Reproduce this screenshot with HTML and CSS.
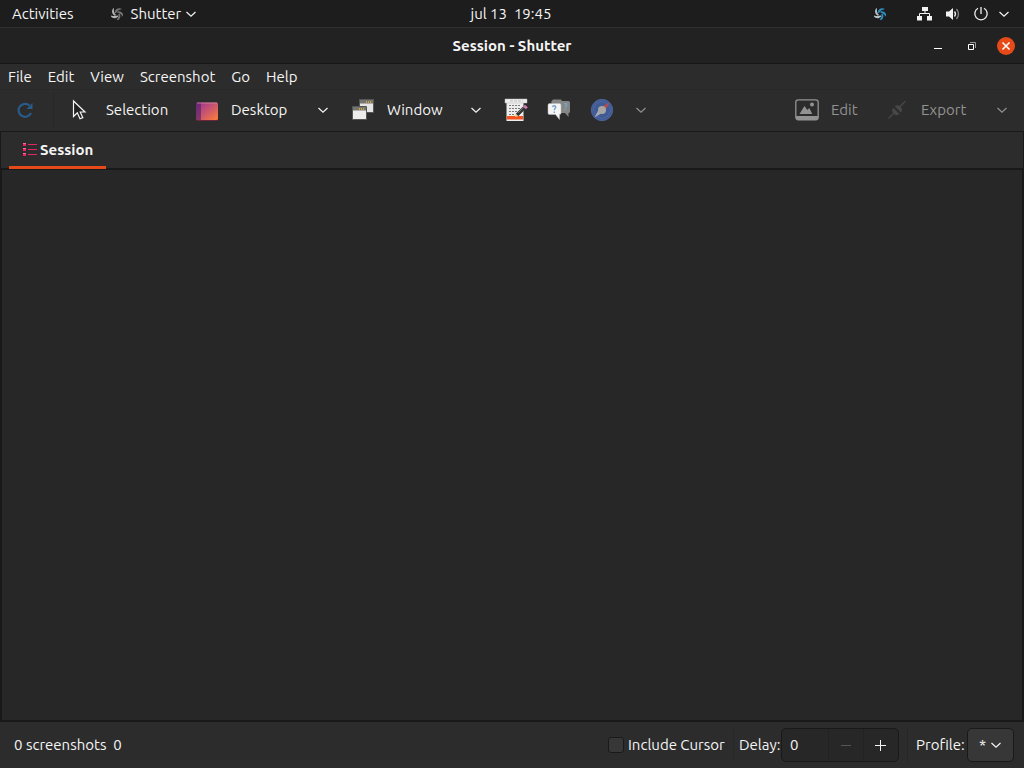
FILE: index.html
```html
<!DOCTYPE html>
<html lang="en">
<head>
<meta charset="utf-8">
<title>Session - Shutter</title>
<link rel="stylesheet" href="styles.css">
</head>
<body>
<svg class="defs" aria-hidden="true">
  <defs>
    <symbol id="chevron" viewBox="0 0 12 12"><path d="M1.500 4 6 8.200 10.500 4" fill="none" stroke="currentColor" stroke-width="1.200"/></symbol>
    <symbol id="swirl" viewBox="0 0 12 12">
      <path d="M11 1C8-.6 4.200.5 3.600 4.800L5 5.200C5.800 2.800 8 2 11 1z" fill="var(--b)"/>
      <path d="M11 1C8-.6 4.200.5 3.600 4.800L5 5.200C5.800 2.800 8 2 11 1z" fill="var(--b)" transform="rotate(72 6 6)"/>
      <path d="M11 1C8-.6 4.200.5 3.600 4.800L5 5.200C5.800 2.800 8 2 11 1z" fill="var(--b)" transform="rotate(144 6 6)"/>
      <path d="M11 1C8-.6 4.200.5 3.600 4.800L5 5.200C5.800 2.800 8 2 11 1z" fill="var(--a)" transform="rotate(216 6 6)"/>
      <path d="M11 1C8-.6 4.200.5 3.600 4.800L5 5.200C5.800 2.800 8 2 11 1z" fill="var(--a)" transform="rotate(288 6 6)"/>
    </symbol>
  </defs>
</svg>
<div class="desktop">
  <header class="panel">
    <div class="panel-left">
      <button class="panel-button">Activities</button>
      <button class="panel-button app-button"><svg class="swirl gray"><use href="#swirl"/></svg><span>Shutter</span><svg class="chev"><use href="#chevron"/></svg></button>
    </div>
    <time class="clock">jul 13&nbsp; 19:45</time>
    <div class="panel-right">
      <svg class="swirl blue"><use href="#swirl"/></svg>
      <div class="trays">
        <svg class="tray" viewBox="0 0 16 16"><path d="M5 1h6v4H5zM0 10h5v4.500H0zM10 10h5v4.500h-5z" fill="#f2f2f2"/><path d="M8 5v2.500M2.500 10V7.500h10V10" fill="none" stroke="#f2f2f2"/></svg>
        <svg class="tray" viewBox="0 0 16 16"><path d="M1 5.500h3L8 2v12L4 10.500H1z" fill="#f2f2f2"/><path d="M9.500 5.500q2 2.500 0 5" fill="none" stroke="#f2f2f2" stroke-width="1.300"/><path d="M11.500 3q4 5 0 10" fill="none" stroke="#858585" stroke-width="1.300"/></svg>
        <svg class="tray" viewBox="0 0 16 16"><path d="M5 2.300a6.200 6.200 0 1 0 6 0M8 1v7" fill="none" stroke="#f2f2f2" stroke-width="1.300"/></svg>
      </div>
      <svg class="chev"><use href="#chevron"/></svg>
    </div>
  </header>

  <div class="titlebar">
    <div></div>
    <h1 class="title">Session - Shutter</h1>
    <div class="window-controls">
      <button class="control" aria-label="Minimize"><svg viewBox="0 0 18 18"><path d="M5 11.500h8" stroke="#fff"/></svg></button>
      <button class="control" aria-label="Restore"><svg viewBox="0 0 18 18"><path d="M5.500 7.500h5v5h-5z" fill="none" stroke="#fff"/><path d="M7 5.500h5.500V11" fill="none" stroke="#999"/></svg></button>
      <button class="control close" aria-label="Close"><svg viewBox="0 0 18 18"><path d="m5.500 5.500 7 7m0-7-7 7" stroke="#fff" stroke-width="1.500"/></svg></button>
    </div>
  </div>

  <nav class="menubar">
    <button>File</button><button>Edit</button><button>View</button><button>Screenshot</button><button>Go</button><button>Help</button>
  </nav>

  <div class="toolbar">
    <button class="tool refresh" aria-label="Redo last screenshot"><svg viewBox="0 0 24 24"><path d="M16.500 7.500A6.500 6.500 0 1 0 18 15" fill="none" stroke="#2a5b88" stroke-width="2.200"/><path d="M19.500 5v6H13.500z" fill="#2a5b88"/></svg></button>
    <span class="divider"></span>
    <button class="tool selection"><svg viewBox="0 0 24 24"><path d="M3.500 3v15.500l3.800-3.700 2.700 6 2.800-1.200-2.600-5.600h4.800z" fill="#222" stroke="#f5f5f5" stroke-width="1.200"/></svg><span>Selection</span></button>
    <button class="tool wallpaper"><svg viewBox="0 0 24 24"><defs><linearGradient id="dg" x1="0" y1="0" x2="1" y2="1"><stop offset="0" stop-color="#9b3192"/><stop offset=".5" stop-color="#c9556f"/><stop offset="1" stop-color="#ff7f36"/></linearGradient></defs><rect x="1" y="5" width="22" height="18" rx="1.500" fill="#6b2638"/><rect x="1" y="4.500" width="22" height="17.500" rx="1.500" fill="url(#dg)"/><path d="M1 6q0-1.500 1.500-1.500H6V22H2.500Q1 22 1 20.500z" fill="#431d68" opacity=".55"/><path d="M2 5h20" stroke="#e6a0ae" opacity=".6"/></svg><span>Desktop</span></button>
    <button class="tool arrow" aria-label="Desktop options"><svg class="chev"><use href="#chevron"/></svg></button>
    <button class="tool window"><svg viewBox="0 0 24 24"><g stroke="#555753"><path d="M8.500 1.500h14v13h-14z" fill="#e5e5e5"/><path d="M1.500 8.500h14v13h-14z" fill="#ededed"/></g><path d="M9 2h13v3.500H9zM2 9h13v3.500H2z" fill="#747672"/><path d="M15 4h1m1 0h1m1 0h1M8 11h1m1 0h1m1 0h1" stroke="#f3ae2c" stroke-width="1.500"/></svg><span>Window</span></button>
    <button class="tool arrow" aria-label="Window options"><svg class="chev"><use href="#chevron"/></svg></button>
    <span class="gap"></span>
    <button class="tool icon-only" aria-label="Menu capture"><svg viewBox="0 0 24 24"><path d="M2.500 3h17v20h-17z" fill="#ededed"/><path d="M1 1h22v4H1z" fill="#eee" stroke="#bbb" stroke-width=".5"/><path d="M6 3h13" stroke="#bbb" stroke-dasharray="3 1"/><path d="M5 7.500h12M5 10.500h11M5 13.500h8M5 16.500h5" stroke="#77797a" stroke-dasharray="2 1"/><path d="M3 18h16v3.500H3z" fill="#f4511e"/><path d="m13 17 8-8" stroke="#303030" stroke-width="3.400"/><path d="m20.500 10 1.800-2" stroke="#d47bb8" stroke-width="4"/><path d="m11 19 .7-3.200 2.600 2.500z" fill="#dece75"/><path d="m14 15 6-5.800" stroke="#858585" stroke-width=".8"/></svg></button>
    <button class="tool icon-only" aria-label="Tooltip capture"><svg viewBox="0 0 24 24"><path d="M6 1.500h8L15 3h6.500q1.500 0 1.500 1.500v9q0 1.500-1.500 1.500v4L18 15h-5L4 4z" fill="#858684"/><path d="M2.500 5.500h10q1.500 0 1.500 1.500v8q0 1.500-1.500 1.500v5l-4-5h-6Q1 16.500 1 15V7q0-1.500 1.500-1.500z" fill="#f4f4f4" stroke="#bbb" stroke-width=".5"/><path d="M5.500 9Q6 7.500 7.500 7.800q2 .5.700 2.500-.9 1-.9 2M7.300 13.500V15M17 6q3-1 2.500 1t-1.500 2.500M18 11v1.300" fill="none" stroke="#78a3cf" stroke-width="1.400"/></svg></button>
    <button class="tool icon-only" aria-label="Web capture"><svg viewBox="0 0 24 24"><circle cx="12" cy="12" r="10.700" fill="#405a94" stroke="#506ba3" stroke-width=".8"/><path d="M6 5.500 12 3l6 3 3 6-3 6-6 3-6-3-3-6z" fill="none" stroke="#5a78b4" opacity=".5"/><path d="M12.500 8.500 19.500 4.500l-4 7.500z" fill="#bd494d"/><path d="M11 15.500 4.500 19.500l4-7.500z" fill="#a8adb4"/><circle cx="12" cy="12" r="4" fill="#a6a6a6"/></svg></button>
    <button class="tool arrow dim" aria-label="Web options" disabled><svg class="chev"><use href="#chevron"/></svg></button>
    <span class="spacer"></span>
    <button class="tool edit dim" disabled><svg viewBox="0 0 24 24"><rect x=".8" y="1.800" width="22.400" height="20" rx="2.500" fill="none" stroke="currentColor" stroke-width="1.300"/><path d="M1 18h22v2q0 2-2 2H3q-2 0-2-2z" fill="currentColor"/><path d="m4.500 16 5-8 2.800 4 2-2 3 6z" fill="currentColor"/><circle cx="17" cy="6.500" r="2" fill="currentColor"/></svg><span>Edit</span></button>
    <button class="tool export dim" disabled><svg viewBox="0 0 24 24"><path d="m3.500 20.500 5-5m6.500-7 5.500-5.500" stroke="#484848" stroke-width="1.300"/><path d="M8.200 9.800a4.500 4.500 0 0 0 6.300 6.300z" fill="#484848"/><path d="M9.700 8.300a4.500 4.500 0 0 1 6.300 6.300z" fill="#484848"/></svg><span>Export</span></button>
    <button class="tool arrow dim" aria-label="Export options" disabled><svg class="chev"><use href="#chevron"/></svg></button>
  </div>

  <main class="notebook">
    <div class="tabs" role="tablist">
      <button class="tab" role="tab" aria-selected="true"><svg viewBox="0 0 16 16"><path d="M1 2.500h3M1 7.500h3M1 12.500h3" stroke="#e72363" stroke-width="3"/><path d="M1 1.500h3M1 6.500h3M1 11.500h3" stroke="#ed719a"/><path d="M6 2.500h9M6 7.500h9M6 12.500h9" stroke="#e72363"/></svg><span>Session</span></button>
    </div>
    <section class="session" role="tabpanel" aria-label="Session"></section>
  </main>

  <footer class="statusbar">
    <output class="status">0 screenshots&nbsp; 0</output>
    <div class="cursor-option"><input type="checkbox" id="cursor"><label for="cursor">Include Cursor</label></div>
    <span class="divider"></span>
    <label class="delay-label" for="delay">Delay:</label>
    <div class="spin">
      <input id="delay" type="text" inputmode="numeric" value="0">
      <button aria-label="Decrease delay" disabled><svg viewBox="0 0 12 12"><path d="M1 6.500h10" stroke="currentColor"/></svg></button>
      <button aria-label="Increase delay"><svg viewBox="0 0 12 12"><path d="M0 6.500h11M5.500 1v11" stroke="currentColor"/></svg></button>
    </div>
    <span class="divider"></span>
    <label class="profile-label" for="profile">Profile:</label>
    <div class="profile"><select id="profile"><option>*</option></select><svg class="chev"><use href="#chevron"/></svg></div>
  </footer>
</div>
</body>
</html>
```
FILE: styles.css
```css
* { box-sizing: border-box; }
body {
  margin: 0;
  background: #272727;
  color: #f5f5f5;
  font: 15px/20px Ubuntu, "Noto Sans", sans-serif;
}
button, input, select { font: inherit; color: inherit; margin: 0; }
button { border: 0; padding: 0; background: none; white-space: nowrap; }
svg { display: block; flex: none; }
.defs { position: absolute; width: 0; height: 0; }
.chev { width: 12px; height: 12px; }

.desktop { display: flex; flex-direction: column; min-height: 100vh; }

.panel {
  display: grid;
  grid-template-columns: 1fr auto 1fr;
  align-items: center;
  height: 28px;
  padding: 0 14px 0 12px;
  background: #1d1d1d;
  border-bottom: 1px solid #303030;
}
.panel-left, .panel-right { display: flex; align-items: center; }
.panel-left { gap: 37px; }
.panel-button { display: flex; align-items: center; }
.app-button span { margin: 0 4px 0 8px; }
.swirl { width: 12px; height: 12px; }
.gray { --a: #b4b4b4; --b: #747474; }
.blue { --a: #b4c0c8; --b: #2c8fbd; }
.panel-right { justify-content: flex-end; }
.trays { display: flex; gap: 12px; margin: 0 9px 0 31px; }
.tray { width: 16px; height: 16px; }

.titlebar {
  display: grid;
  grid-template-columns: 1fr auto 1fr;
  align-items: center;
  height: 36px;
  padding: 0 9px;
  background: #222;
  border-bottom: 1px solid #171717;
}
.title { margin: 0; font-size: 15px; line-height: 20px; font-weight: 700; }
.window-controls { display: flex; justify-content: flex-end; gap: 16px; }
.control { width: 18px; height: 18px; border-radius: 50%; }
.control svg { width: 18px; height: 18px; }
.close { background: #e64a19; }

.menubar {
  display: flex;
  gap: 16px;
  height: 26px;
  padding: 0 8px;
  background: #2c2c2c;
  border-bottom: 1px solid #292929;
}

.toolbar {
  display: flex;
  align-items: center;
  height: 42px;
  padding: 0 6px 2px 0;
  background: #2c2c2c;
  border-bottom: 1px solid #191919;
}
.tool { display: flex; align-items: center; gap: 12px; height: 38px; padding-left: 12px; flex: none; }
.tool svg { width: 24px; height: 24px; }
.tool .chev { width: 12px; height: 12px; }
.dim { color: #929292; }
.refresh { width: 53px; padding-left: 13px; }
.divider { width: 1px; height: 34px; background: #272727; flex: none; }
.selection { width: 129px; padding-left: 16px; }
.wallpaper { width: 124px; }
.window { width: 121px; }
.arrow { width: 32px; padding: 0; justify-content: center; }
.icon-only + .arrow { width: 36px; }
.gap { width: 2px; flex: none; }
.icon-only { width: 43px; padding: 0; justify-content: center; }
.spacer { flex: 1; }
.edit { width: 90px; }
.export { width: 113px; }

.notebook { display: flex; flex-direction: column; flex: 1; background: #2c2c2c; border: solid #191919; border-width: 0 1px; }
.tabs { display: flex; height: 38px; padding-left: 8px; border-bottom: 2px solid #191919; }
.tab {
  display: flex;
  align-items: center;
  gap: 2px;
  height: 37px;
  padding: 2px 13px 0;
  border-bottom: 3px solid #e64a19;
  font-weight: 700;
}
.tab svg { width: 16px; height: 16px; }
.session { flex: 1; background: #272727; border: 1px solid #191919; border-width: 0 1px; }

.statusbar {
  display: flex;
  align-items: center;
  height: 48px;
  padding: 0 10px 0 14px;
  background: #2c2c2c;
  border-top: 2px solid #191919;
}
.status { flex: 1; }
.cursor-option { display: flex; align-items: center; gap: 4px; width: 125px; white-space: nowrap; }
.cursor-option input {
  appearance: none;
  width: 16px;
  height: 16px;
  background: #373737;
  border: 1px solid #191919;
  border-radius: 3px;
}
.delay-label { width: 47px; padding-left: 5px; }
.spin {
  display: flex;
  width: 118px;
  height: 34px;
  margin-right: 8px;
  background: #272727;
  border: 1px solid #191919;
  border-radius: 5px;
  overflow: hidden;
}
.spin input { flex: 1; min-width: 0; padding: 0 8px; border: 0; background: none; }
.spin button { display: flex; align-items: center; justify-content: center; width: 35px; border-left: 1px solid #222; }
.spin button:disabled { color: #555; }
.spin svg { width: 12px; height: 12px; }
.profile-label { width: 59px; padding-left: 8px; }
.profile { position: relative; width: 47px; height: 34px; }
.profile select {
  appearance: none;
  width: 100%;
  height: 100%;
  padding: 0 11px;
  background: #373737;
  border: 1px solid #191919;
  border-radius: 5px;
}
.profile .chev { position: absolute; right: 12px; top: 11px; pointer-events: none; }
```
